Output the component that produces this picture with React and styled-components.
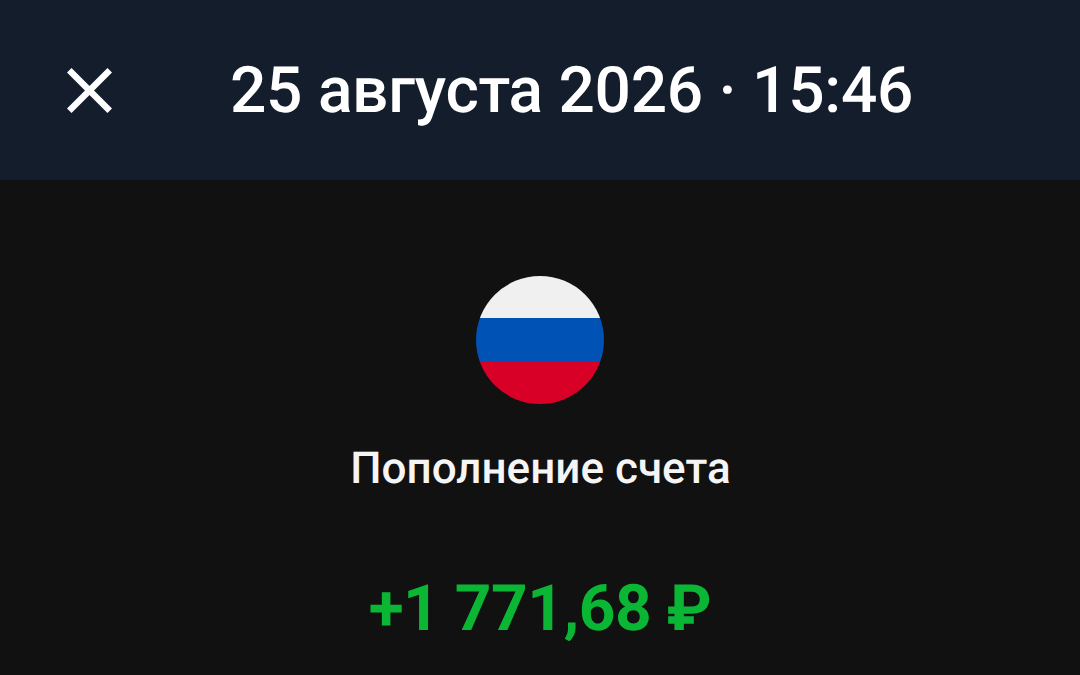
import React from 'react';
import styled, { createGlobalStyle } from 'styled-components';

const GlobalStyle = createGlobalStyle`
  * {
    box-sizing: border-box;
  }

  body {
    margin: 0;
    background-color: #111111;
    font-family: Roboto, sans-serif;
    text-rendering: geometricPrecision;
  }
`;

const Screen = styled.main`
  display: flex;
  flex-direction: column;
  height: 675px;
  overflow: hidden;
  background-color: #111111;
`;

const Header = styled.header`
  display: flex;
  align-items: center;
  height: 180px;
  padding-left: 67px;
  background-color: #141d2b;
`;

const CloseButton = styled.button`
  display: flex;
  width: 45px;
  height: 45px;
  padding: 0;
  border: none;
  background: none;
  color: #ffffff;
`;

const HeaderTitle = styled.h1`
  margin: 2px 0 0 118px;
  font-size: 64px;
  font-weight: 500;
  line-height: 76px;
  letter-spacing: -0.26px;
  color: #ffffff;
  white-space: nowrap;
`;

// tighter gap between "т" and "а"
const Kern = styled.span`
  letter-spacing: -1.9px;
`;

const Details = styled.section`
  display: flex;
  flex-direction: column;
  align-items: center;
  padding-top: 96px;
`;

const Flag = styled.div`
  display: grid;
  grid-template-rows: 42px 44px 42px;
  width: 128px;
  height: 128px;
  border-radius: 50%;
  overflow: hidden;
`;

const Stripe = styled.div`
  background-color: ${({ $color }) => $color};
`;

const Operation = styled.p`
  margin: 37px 0 0;
  padding-left: 1px;
  font-size: 44px;
  font-weight: 500;
  line-height: 54px;
  color: #f5f5f5;
  white-space: nowrap;
`;

const Amount = styled.p`
  margin: 76px 0 0;
  font-size: 64px;
  font-weight: 700;
  line-height: 76px;
  letter-spacing: -0.48px;
  color: #0ab633;
  white-space: nowrap;
`;

const CloseIcon = () => (
  <svg width="45" height="45" viewBox="5 5 14 14" fill="currentColor">
    <path d="M19 6.41L17.59 5 12 10.59 6.41 5 5 6.41 10.59 12 5 17.59 6.41 19 12 13.41 17.59 19 19 17.59 13.41 12z" />
  </svg>
);

const App = () => {
  return (
    <Screen>
      <GlobalStyle />
      <Header>
        <CloseButton type="button" aria-label="Закрыть">
          <CloseIcon />
        </CloseButton>
        <HeaderTitle>
          25 авгус<Kern>т</Kern>а 2026 · 15:46
        </HeaderTitle>
      </Header>
      <Details>
        <Flag>
          <Stripe $color="#f0f0f0" />
          <Stripe $color="#0052b4" />
          <Stripe $color="#d80027" />
        </Flag>
        <Operation>Пополнение счета</Operation>
        <Amount>+1 771,68 ₽</Amount>
      </Details>
    </Screen>
  );
};

export default App;
